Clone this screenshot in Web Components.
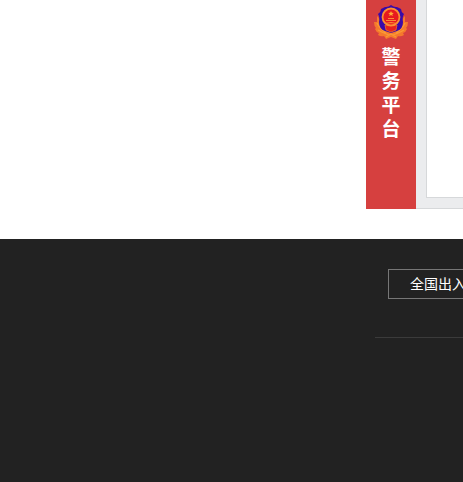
<!DOCTYPE html>
<html lang="zh-CN"><head><meta charset="utf-8"><title>警务平台</title>
<style>html,body{margin:0;height:100%;overflow:hidden;background:#fff}</style></head>
<body><portal-page></portal-page>
<script>
const define=(name,html)=>customElements.define(name,class extends HTMLElement{
  constructor(){super();this.attachShadow({mode:'open'}).innerHTML=html}
});
define('police-badge',`<style>:host{display:block;width:36px;height:35px}svg{display:block}</style>
<svg width="36" height="35" viewBox="0 0 36 35">
<path d="M4 11Q7 13 7 19L10 24L18 26L26 24L29 19Q29 13 32 11L32 17L35 17Q35 21 33 23L34 24Q33 27 30 28L31 30Q28 32 25 31L23 34L18 32L13 34L11 31Q8 32 5 30L6 28Q3 27 2 24L3 23Q1 21 1 17L4 17Z" fill="#f5792c"/>
<path d="M4 18Q7 24 13 28M5 25Q10 28 16 30M32 18Q29 24 23 28M31 25Q26 28 20 30M13 32L18 29L23 32" fill="none" stroke="#f99a35" stroke-width="1.3"/>
<path d="M18 0Q21 2.500 24 2L28 4Q28 7 31 9Q29 12 30 17Q30 24 24 26L18 28L12 26Q6 24 6 17Q7 12 5 9Q8 7 8 4L12 2Q15 2.500 18 0Z" fill="#3a0ba8"/>
<path d="M12 20H24L23 25L18 27L13 25Z" fill="#e6201e" stroke="#f06a28" stroke-width=".8"/>
<circle cx="18" cy="12" r="8.500" fill="#e8191e" stroke="#fb8f32" stroke-width="1.800"/>
<path d="M18 6L18.800 7.800L20.800 8L19.300 9.300L19.800 11L18 10L16.200 11L16.700 9.300L15.200 8L17.200 7.800Z" fill="#ffad35"/>
<path d="M13 15.500H23M15 13.500H21M12 18.500L18 17.500L24 18.500" stroke="#f98a32" stroke-width="1.200" fill="none"/>
</svg>`);
define('side-tab',`<style>:host{display:flex;flex-direction:column;align-items:center;box-sizing:border-box;width:50px;height:209px;padding-top:5px;background:#d6403f;color:#fff;font:bold 19px/24px "Noto Sans CJK SC",sans-serif}
.label{width:20px;margin-top:4px;text-align:center;word-break:break-all}</style>
<police-badge></police-badge><div class="label"><slot></slot></div>`);
define('content-panel',`<style>:host{display:block;box-sizing:border-box;flex:1;height:209px;padding:0 0 10px 10px;background:#ebecee;border-bottom:1px solid #d6d8da}
.inner{height:198px;box-sizing:border-box;background:#fff;border-left:1px solid #d6d8da;border-bottom:1px solid #d6d8da}</style><div class="inner"><slot></slot></div>`);
define('footer-link',`<style>:host{display:block;box-sizing:border-box;width:240px;height:30px;margin-left:13px;padding-left:21px;border:1px solid #777;color:#fff;font:14px/26px "Noto Sans CJK SC",sans-serif;white-space:nowrap}</style><slot></slot>`);
define('site-footer',`<style>:host{display:block;box-sizing:border-box;height:243px;padding:30px 0 0 375px;background:#222;overflow:hidden}
.rule{height:1px;margin-top:38px;background:#3b3b3b}</style><slot></slot><div class="rule"></div>`);
define('portal-page',`<style>:host{display:block;height:482px;overflow:hidden}.row{display:flex;height:209px;padding-left:366px;margin-bottom:30px}</style>
<div class="row"><side-tab>警务平台</side-tab><content-panel></content-panel></div>
<site-footer><footer-link>全国出入</footer-link></site-footer>`);
</script></body></html>
